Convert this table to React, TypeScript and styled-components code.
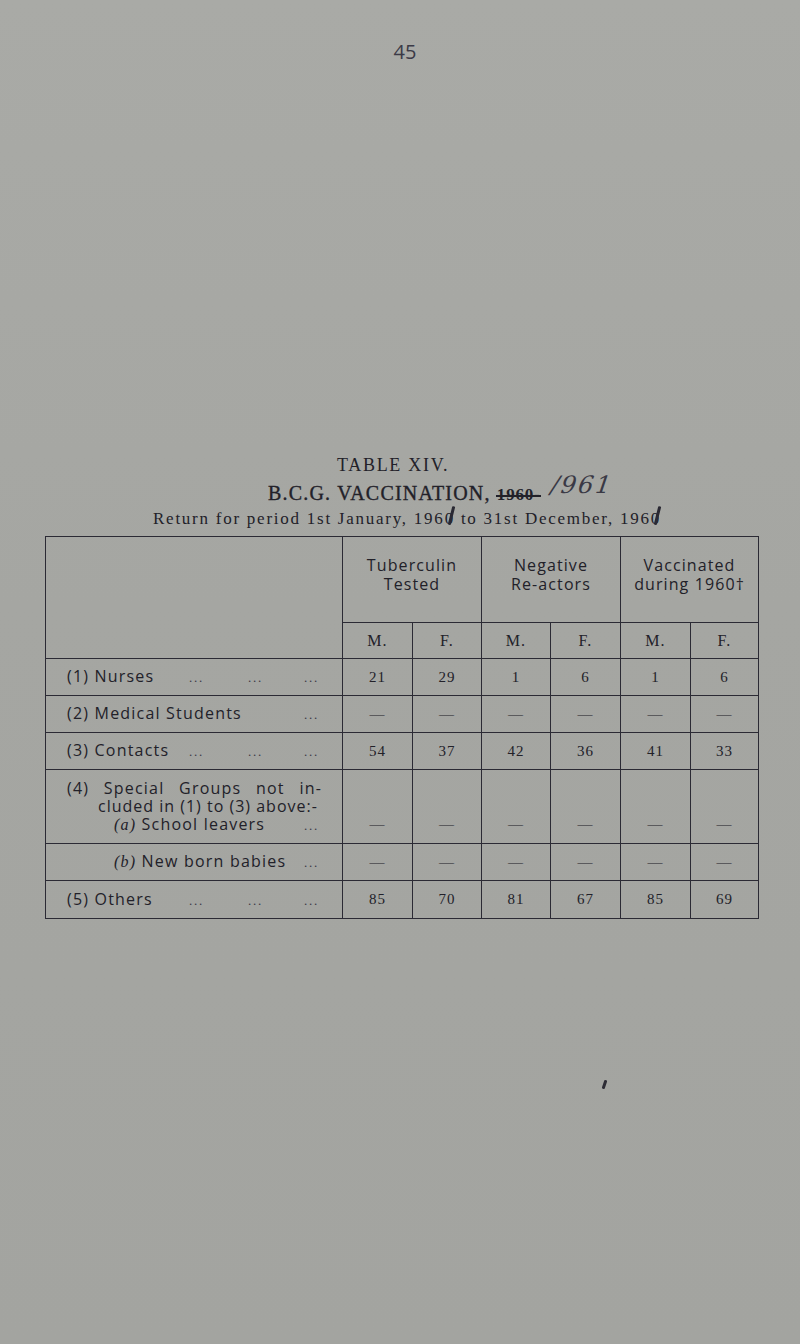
import React from "react";
import styled, {createGlobalStyle} from "styled-components";

const GlobalStyle = createGlobalStyle`
  html, body {
    margin: 0;
    padding: 0;
    background: #a5a6a2;
  }
  body {
    font-family: "Liberation Serif", serif;
    color: #222129;
  }
`;

const Page = styled.div`
  position: relative;
  width: 800px;
  height: 1344px;
  background: linear-gradient(180deg, #a9aaa6 0%, #a5a6a2 45%, #a3a4a0 100%);
  overflow: hidden;
`;

const PageNumber = styled.div`
  padding-top: 41px;
  padding-left: 10px;
  height: 22px;
  text-align: center;
  font-family: "Open Sans", sans-serif;
  font-size: 20px;
  line-height: 22px;
  color: #3b3a47;
`;

const TitleBlock = styled.div`
  margin-top: 389px;
  display: flex;
  flex-direction: column;
`;

const TitleLine = styled.div<{$indent: number; $size: number; $lh: number; $spacing?: number}>`
  padding-left: ${p => p.$indent}px;
  font-size: ${p => p.$size}px;
  line-height: ${p => p.$lh}px;
  letter-spacing: ${p => p.$spacing ?? 0}px;
  white-space: nowrap;
  color: #222129;
`;

const Heavy = styled.span`
  -webkit-text-stroke: 0.35px #222129;
`;

const Struck = styled.span`
  position: relative;
  font-size: 17px;
  font-weight: 700;
  letter-spacing: 0.8px;
  &::after {
    content: "";
    position: absolute;
    left: -1px;
    right: 0;
    top: 52%;
    height: 2px;
    background: #222129;
  }
`;

const Handwritten = styled.span`
  display: inline-block;
  margin-left: 10px;
  font-family: "DejaVu Serif", serif;
  font-style: italic;
  font-weight: 300;
  font-size: 24px;
  letter-spacing: 2px;
  color: #3a3945;
  transform: translateY(-7px) skewX(-8deg);
`;

const Overwritten = styled.span`
  position: relative;
  &::after {
    content: "";
    position: absolute;
    left: 5px;
    top: -3px;
    width: 2.5px;
    height: 19px;
    background: #2a2933;
    transform: rotate(14deg);
    border-radius: 1px;
  }
`;

const Table = styled.table`
  margin-top: 6px;
  margin-left: 45px;
  border-collapse: collapse;
  table-layout: fixed;
  width: 713px;
`;

const Cell = styled.td<{$h?: number; $bottom?: boolean}>`
  box-sizing: border-box;
  border: 1.5px solid #2b2a34;
  padding: 0;
  height: ${p => p.$h ?? 36}px;
  vertical-align: ${p => (p.$bottom ? "bottom" : "middle")};
`;

const GroupHead = styled(Cell)`
  text-align: center;
  font-family: "Open Sans", sans-serif;
  font-size: 16px;
  line-height: 19px;
  letter-spacing: 1.1px;
  color: #222129;
  padding-bottom: 10px;
`;

const SexHead = styled(Cell)`
  text-align: center;
  font-size: 16px;
  letter-spacing: 1.2px;
  color: #222129;
`;

const Num = styled(Cell)`
  text-align: center;
  font-size: 15px;
  letter-spacing: 1px;
  color: #222129;
  padding-bottom: ${p => (p.$bottom ? "10px" : "0")};
`;

const LabelCell = styled(Cell)`
  padding: 0 20px 0 21px;
  font-family: "Open Sans", sans-serif;
  font-size: 16px;
  letter-spacing: 1.2px;
  color: #222129;
`;

const LabelRow = styled.div`
  display: grid;
  grid-template-columns: 122px 59px 56px 1fr;
  align-items: baseline;
  line-height: 18px;
  white-space: nowrap;
`;

const Name = styled.span<{$indent?: number; $span?: boolean}>`
  padding-left: ${p => p.$indent ?? 0}px;
  grid-column: ${p => (p.$span ? "1 / 4" : "auto")};
`;

const Dots = styled.span`
  font-family: "Liberation Serif", serif;
  font-size: 13px;
  letter-spacing: 1.8px;
  color: #3a3945;
`;

const Justified = styled.div`
  text-align: justify;
  text-align-last: justify;
  line-height: 18px;
`;

const Indented = styled.div<{$indent: number}>`
  padding-left: ${p => p.$indent}px;
  line-height: 18px;
  white-space: nowrap;
  letter-spacing: 1px;
`;

const Emph = styled.i`
  font-family: "Liberation Serif", serif;
  font-size: 16px;
`;

const Speck = styled.span`
  position: absolute;
  left: 603px;
  top: 1080px;
  width: 3px;
  height: 9px;
  background: #2e2d36;
  border-radius: 1px;
  transform: rotate(18deg);
`;

type Row = {
  label: React.ReactNode;
  values: string[];
};

const DASHES = ["—", "—", "—", "—", "—", "—"];

const DotRun = ({count}: {count: number}) => (
  <>
    {Array.from({length: count}).map((_, i) => (
      <Dots key={i}>...</Dots>
    ))}
  </>
);

const Label = ({name, dots, indent}: {name: React.ReactNode; dots: number; indent?: number}) => (
  <LabelRow>
    <Name $indent={indent} $span={dots === 1}>{name}</Name>
    <DotRun count={dots} />
  </LabelRow>
);

const rows: Row[] = [
  {label: <Label name="(1) Nurses" dots={3} />, values: ["21", "29", "1", "6", "1", "6"]},
  {label: <Label name="(2) Medical Students" dots={1} />, values: DASHES},
  {label: <Label name="(3) Contacts" dots={3} />, values: ["54", "37", "42", "36", "41", "33"]},
];

export default function App() {
  return (
    <Page>
      <GlobalStyle />
      <PageNumber>45</PageNumber>
      <TitleBlock>
        <TitleLine $indent={337} $size={18} $lh={27} $spacing={1.7}>TABLE XIV.</TitleLine>
        <TitleLine $indent={268} $size={20} $lh={26} $spacing={1.2}>
          <Heavy>B.C.G. VACCINATION, </Heavy>
          <Struck>1960-</Struck>
          <Handwritten>/961</Handwritten>
        </TitleLine>
        <TitleLine $indent={153} $size={17} $lh={22} $spacing={1.75}>
          Return for period 1st January, 196<Overwritten>0</Overwritten> to 31st December, 196
          <Overwritten>0</Overwritten>
        </TitleLine>
      </TitleBlock>

      <Table>
        <colgroup>
          <col style={{width: 297}} />
          <col style={{width: 70}} />
          <col style={{width: 69}} />
          <col style={{width: 69}} />
          <col style={{width: 70}} />
          <col style={{width: 70}} />
          <col style={{width: 68}} />
        </colgroup>
        <tbody>
          <tr>
            <Cell rowSpan={2} />
            <GroupHead colSpan={2} $h={86}>Tuberculin<br />Tested</GroupHead>
            <GroupHead colSpan={2} $h={86}>Negative<br />Re-actors</GroupHead>
            <GroupHead colSpan={2} $h={86}>Vaccinated<br />during 1960†</GroupHead>
          </tr>
          <tr>
            {["M.", "F.", "M.", "F.", "M.", "F."].map((s, i) => (
              <SexHead key={i} $h={36}>{s}</SexHead>
            ))}
          </tr>
          {rows.map((r, i) => (
            <tr key={i}>
              <LabelCell $h={37}>{r.label}</LabelCell>
              {r.values.map((v, j) => (
                <Num key={j} $h={37}>{v}</Num>
              ))}
            </tr>
          ))}
          <tr>
            <LabelCell $h={74}>
              <Justified>(4) Special Groups not in-</Justified>
              <Indented $indent={31}>cluded in (1) to (3) above:-</Indented>
              <Label name={<><Emph>(a)</Emph> School leavers</>} dots={1} indent={47} />
            </LabelCell>
            {DASHES.map((v, j) => (
              <Num key={j} $h={74} $bottom>{v}</Num>
            ))}
          </tr>
          <tr>
            <LabelCell $h={37}>
              <Label name={<><Emph>(b)</Emph> New born babies</>} dots={1} indent={47} />
            </LabelCell>
            {DASHES.map((v, j) => (
              <Num key={j} $h={37}>{v}</Num>
            ))}
          </tr>
          <tr>
            <LabelCell $h={38}>
              <Label name="(5) Others" dots={3} />
            </LabelCell>
            {["85", "70", "81", "67", "85", "69"].map((v, j) => (
              <Num key={j} $h={38}>{v}</Num>
            ))}
          </tr>
        </tbody>
      </Table>
      <Speck />
    </Page>
  );
}
